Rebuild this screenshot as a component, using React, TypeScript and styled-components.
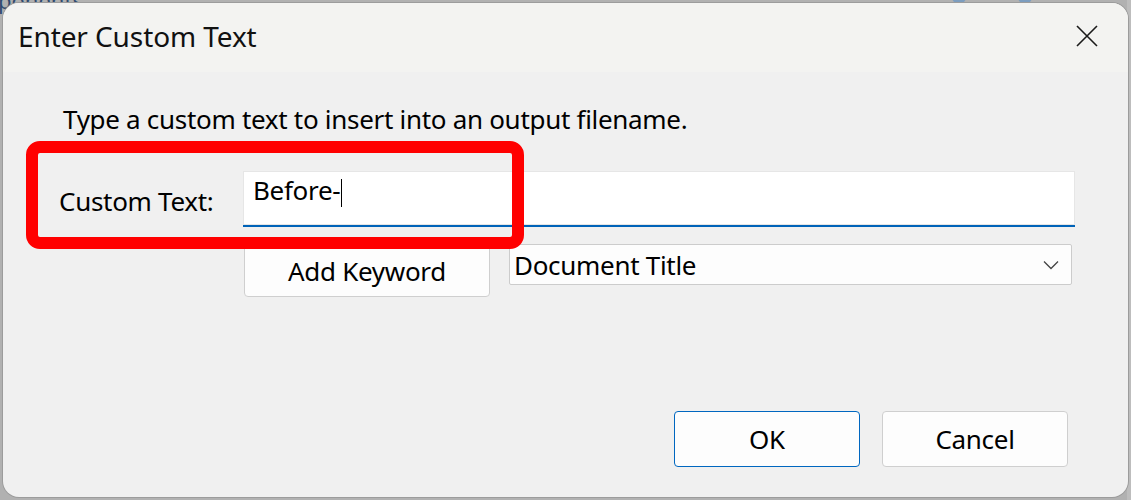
import React from "react";
import styled, { createGlobalStyle } from "styled-components";

const Global = createGlobalStyle`
  html, body { margin: 0; padding: 0; }
  body {
    background: #acacac;
    overflow: hidden;
    font-family: "Noto Sans", "Open Sans", sans-serif;
  }
`;

const Stage = styled.div`
  position: relative;
  width: 1131px;
  height: 500px;
  background: #b1b1b1;
  overflow: hidden;
`;

const BehindText = styled.div`
  position: absolute;
  left: -2px;
  top: -15px;
  font-size: 22px;
  color: #2f4a70;
  font-family: "Noto Sans", sans-serif;
`;

const BehindDot = styled.div<{ $x: number }>`
  position: absolute;
  top: -10px;
  left: ${(p) => p.$x}px;
  width: 14px;
  height: 14px;
  border-radius: 50%;
  background: #7c9dbf;
`;

const RightStrip = styled.div`
  position: absolute;
  right: 0;
  top: 0;
  width: 4px;
  height: 500px;
  background: #bdbdbd;
`;

const Window = styled.div`
  position: absolute;
  left: 3px;
  top: 3px;
  width: 1125px;
  height: 494px;
  border-radius: 16px;
  background: #f0f0f0;
  box-shadow: 0 0 0 1px #9c9c9c;
  overflow: hidden;
  display: flex;
  flex-direction: column;
`;

const TitleBar = styled.div`
  height: 69px;
  flex: none;
  background: #f3f3f1;
  display: flex;
  align-items: center;
  justify-content: space-between;
  padding: 0 30px 0 15px;
  box-sizing: border-box;
`;

const Title = styled.div`
  font-size: 28px;
  color: #111;
  letter-spacing: -0.1px;
  margin-top: -3px;
`;

const CloseBtn = styled.div`
  width: 22px;
  height: 22px;
  display: flex;
  margin-top: -3px;
`;

const Body = styled.div`
  position: relative;
  flex: 1;
  display: flex;
  flex-direction: column;
  padding: 29px 0 0 0;
`;

const Description = styled.div`
  font-size: 26px;
  color: #000;
  margin-left: 60px;
  line-height: 36px;
  letter-spacing: -0.3px;
`;

const FormGrid = styled.div`
  display: grid;
  grid-template-columns: 240px 832px;
  grid-template-rows: 56px 52px;
  row-gap: 17px;
  margin-top: 34px;
`;

const Label = styled.div`
  font-size: 26px;
  color: #000;
  padding-left: 56px;
  display: flex;
  align-items: center;
  letter-spacing: -0.3px;
  padding-top: 3px;
`;

const Input = styled.div`
  background: #fff;
  border-bottom: 2px solid #0063b8;
  box-shadow: inset 0 0 0 1px #e6e6e6;
  box-sizing: border-box;
  display: flex;
  align-items: flex-start;
  padding: 1px 0 0 10px;
  font-size: 26px;
  color: #000;
  letter-spacing: -0.3px;
`;

const Caret = styled.span`
  display: inline-block;
  width: 1px;
  height: 28px;
  background: #000;
  margin-top: 7px;
  margin-left: 1px;
`;

const SecondRow = styled.div`
  display: flex;
  align-items: flex-start;
  gap: 19px;
  padding-left: 1px;
`;

const Button = styled.div<{ $primary?: boolean; $w: number; $h: number }>`
  width: ${(p) => p.$w}px;
  height: ${(p) => p.$h}px;
  box-sizing: border-box;
  background: #fdfdfd;
  border: 1px solid ${(p) => (p.$primary ? "#0067c0" : "#cfcfcf")};
  border-radius: 4px;
  display: flex;
  align-items: center;
  justify-content: center;
  font-size: 26px;
  color: #000;
  letter-spacing: -0.3px;
`;

const Select = styled.div`
  width: 563px;
  height: 41px;
  box-sizing: border-box;
  background: #fdfdfd;
  border: 1px solid #cccccc;
  border-radius: 2px;
  display: flex;
  align-items: center;
  justify-content: space-between;
  padding: 0 12px 0 4px;
  font-size: 26px;
  color: #000;
  letter-spacing: -0.3px;
`;

const Footer = styled.div`
  display: flex;
  justify-content: flex-end;
  gap: 22px;
  padding-right: 60px;
  margin-top: auto;
  margin-bottom: 30px;
`;

const Highlight = styled.div`
  position: absolute;
  left: 23px;
  top: 69px;
  width: 498px;
  height: 108px;
  box-sizing: border-box;
  border: 12px solid #ff0000;
  border-radius: 14px;
  pointer-events: none;
`;

export default function App() {
  return (
    <Stage>
      <Global />
      <BehindText>ponents</BehindText>
      <BehindDot $x={952} />
      <BehindDot $x={1018} />
      <RightStrip />
      <Window>
        <TitleBar>
          <Title>Enter Custom Text</Title>
          <CloseBtn>
            <svg width="22" height="22" viewBox="0 0 22 22">
              <path d="M1 1 L21 21 M21 1 L1 21" stroke="#1a1a1a" strokeWidth="1.6" />
            </svg>
          </CloseBtn>
        </TitleBar>
        <Body>
          <Description>Type a custom text to insert into an output filename.</Description>
          <FormGrid>
            <Label>Custom Text:</Label>
            <Input>
              Before-<Caret />
            </Input>
            <div />
            <SecondRow>
              <Button $w={246} $h={53}>Add Keyword</Button>
              <Select>
                <span>Document Title</span>
                <svg width="16" height="10" viewBox="0 0 16 10">
                  <path d="M1 1.5 L8 8.5 L15 1.5" fill="none" stroke="#444" strokeWidth="1.3" />
                </svg>
              </Select>
            </SecondRow>
          </FormGrid>
          <Footer>
            <Button $primary $w={186} $h={56}>OK</Button>
            <Button $w={186} $h={56}>Cancel</Button>
          </Footer>
          <Highlight />
        </Body>
      </Window>
    </Stage>
  );
}
